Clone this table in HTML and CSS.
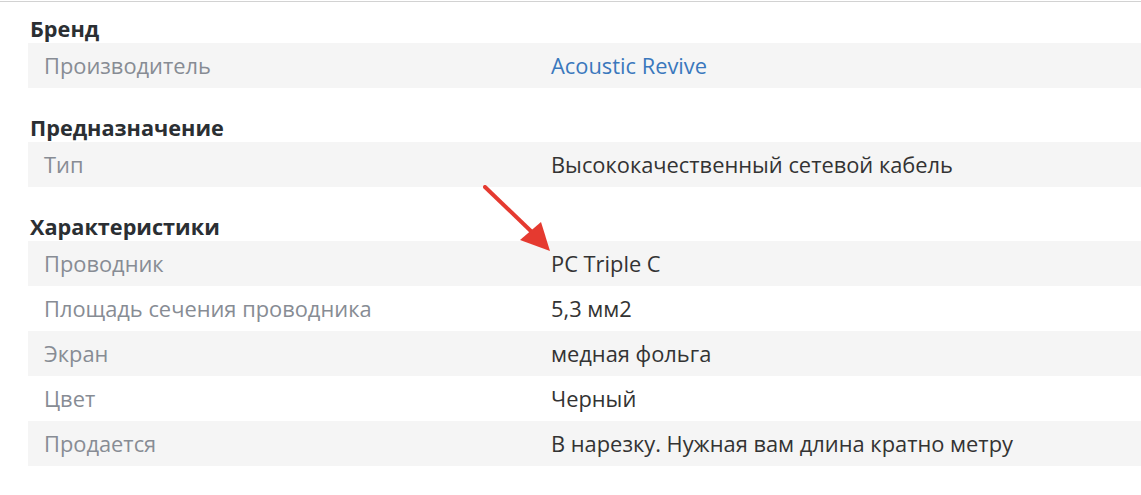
FILE: index.html
```html
<!DOCTYPE html>
<html lang="ru">
<head>
<meta charset="utf-8">
<title>Характеристики</title>
<link rel="stylesheet" href="styles.css">
</head>
<body>
<div class="specs">
  <section class="group">
    <h3 class="group-title">Бренд</h3>
    <div class="row odd"><div class="label">Производитель</div><div class="value"><a class="link" href="#">Acoustic Revive</a></div></div>
  </section>
  <section class="group">
    <h3 class="group-title">Предназначение</h3>
    <div class="row odd"><div class="label">Тип</div><div class="value">Высококачественный сетевой кабель</div></div>
  </section>
  <section class="group">
    <h3 class="group-title">Характеристики</h3>
    <div class="row odd"><div class="label">Проводник</div><div class="value">PC Triple C</div></div>
    <div class="row"><div class="label">Площадь сечения проводника</div><div class="value">5,3 мм2</div></div>
    <div class="row odd"><div class="label">Экран</div><div class="value">медная фольга</div></div>
    <div class="row"><div class="label">Цвет</div><div class="value">Черный</div></div>
    <div class="row odd"><div class="label">Продается</div><div class="value">В нарезку. Нужная вам длина кратно метру</div></div>
  </section>
  <svg class="arrow" width="80" height="80" viewBox="0 0 80 80" aria-hidden="true">
    <line x1="2" y1="2" x2="52" y2="50" stroke="#e53a30" stroke-width="4" stroke-linecap="round"/>
    <polygon points="67,66 37,55 58,37" fill="#e53a30"/>
  </svg>
</div>
</body>
</html>
```
FILE: styles.css
```css
html, body {
  margin: 0;
  padding: 0;
  background: #ffffff;
}
body {
  font-family: "Open Sans", "Liberation Sans", sans-serif;
  font-size: 21.85px;
  color: #333333;
}
.specs {
  position: relative;
  margin-top: 1px;
  border-top: 1px solid #d2d2d2;
  padding-left: 28px;
}
.group + .group {
  margin-top: 13px;
}
.group-title {
  margin: 0 0 1px 0;
  padding: 13px 0 0 2px;
  font-size: 21.7px;
  line-height: 27px;
  font-weight: 700;
  color: #2b2f33;
}
.row {
  display: flex;
  line-height: 27px;
}
.row.odd {
  background: #f5f5f5;
}
.label {
  width: 475px;
  flex: none;
  padding: 9px 16px;
  color: #878c94;
}
.value {
  flex: 1;
  padding: 9px 16px;
  color: #333333;
}
.link {
  color: #3a78bd;
  text-decoration: none;
}
.arrow {
  position: absolute;
  left: 483px;
  top: 183px;
}
```
